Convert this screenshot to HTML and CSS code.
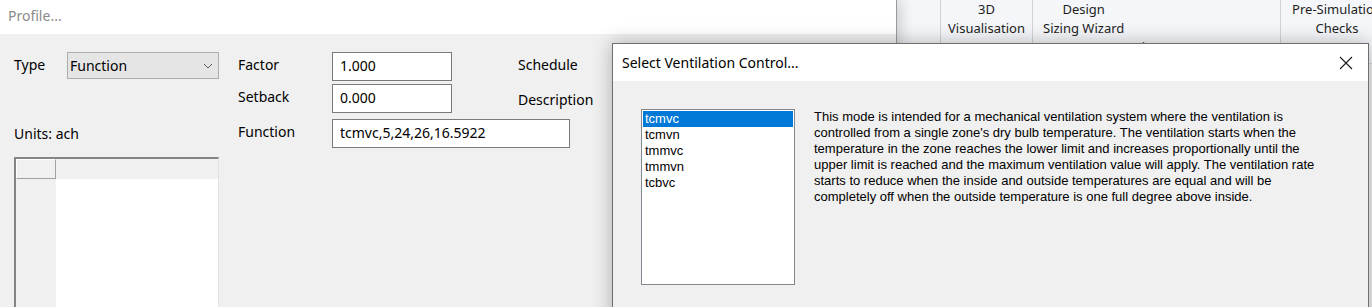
FILE: index.html
```html
<!DOCTYPE html>
<html lang="en">
<head>
    <meta charset="UTF-8">
    <title>Profile - Select Ventilation Control</title>
    <link rel="stylesheet" href="styles.css">
</head>
<body>
<div class="desktop">

    <!-- Profile window (left) -->
    <div class="profile-win">
        <div class="titlebar">Profile...</div>
        <div class="profile-body">
            <div class="form">
                <span class="lbl">Type</span>
                <div class="combo">
                    <span>Function</span>
                    <svg class="chevron" width="10" height="6" viewBox="0 0 10 6">
                        <path d="M1 1 L5 5 L9 1" fill="none" stroke="#606060" stroke-width="1"/>
                    </svg>
                </div>
                <span></span>
                <span class="lbl">Factor</span>
                <div class="cell"><div class="txt">1.000</div></div>
                <span class="lbl">Schedule</span>

                <span class="skip"></span>
                <span class="lbl">Setback</span>
                <div class="cell"><div class="txt">0.000</div></div>
                <span class="lbl desc">Description</span>

                <span class="lbl units">Units: ach</span>
                <span></span>
                <span class="lbl">Function</span>
                <div class="cell wide"><div class="txt txt-long">tcmvc,5,24,26,16.5922</div></div>
            </div>

            <div class="grid-box">
                <div class="corner"></div>
                <div class="col-head"></div>
                <div class="row-head"></div>
                <div class="data"></div>
            </div>
        </div>
    </div>

    <!-- Main window ribbon (right, behind) -->
    <div class="ribbon-win">
        <div class="ribbon">
            <div class="group g-first"></div>
            <div class="group g-3d">
                <div class="btn-text">3D<br>Visualisation</div>
                <div class="group-label">3D</div>
            </div>
            <div class="group g-design">
                <div class="btn-text btn-left">Design<br>Sizing Wizard</div>
                <div class="group-label">Design Days</div>
            </div>
            <div class="group g-pre">
                <div class="btn-text">Pre-Simulation<br>Checks</div>
            </div>
        </div>
        <div class="ribbon-rest"></div>
    </div>

    <!-- Dialog on top -->
    <div class="dialog">
        <div class="dlg-title">
            <span>Select Ventilation Control...</span>
            <svg class="close" width="14" height="14" viewBox="0 0 14 14">
                <path d="M1 1 L13 13 M13 1 L1 13" stroke="#1a1a1a" stroke-width="1.1"/>
            </svg>
        </div>
        <div class="dlg-body">
            <ul class="listbox">
                <li class="selected">tcmvc</li>
                <li>tcmvn</li>
                <li>tmmvc</li>
                <li>tmmvn</li>
                <li>tcbvc</li>
            </ul>
            <p class="mode-desc">
                This mode is intended for a mechanical ventilation system where the ventilation is<br>
                controlled from a single zone's dry bulb temperature. The ventilation starts when the<br>
                temperature in the zone reaches the lower limit and increases proportionally until the<br>
                upper limit is reached and the maximum ventilation value will apply. The ventilation rate<br>
                starts to reduce when the inside and outside temperatures are equal and will be<br>
                completely off when the outside temperature is one full degree above inside.
            </p>
        </div>
    </div>

</div>
</body>
</html>
```

FILE: styles.css
```css
body {
    margin: 0;
    width: 1372px;
    height: 307px;
    overflow: hidden;
    font-family: "Noto Sans", sans-serif;
    color: #000;
}

.desktop {
    position: relative;
    display: flex;
    width: 1372px;
    height: 307px;
    overflow: hidden;
    background-color: #f0f0f0;
}

/* Janela Profile */
.profile-win {
    position: relative;
    z-index: 1;
    width: 896px;
    flex-shrink: 0;
    background-color: #f0f0f0;
    border-right: 1px solid #9a9a9a;
    box-shadow: 3px 0 14px rgba(0,0,0,0.18);
}

.titlebar {
    height: 34px;
    background-color: #fff;
    padding-left: 8px;
    font-size: 14px;
    line-height: 32px;
    color: #8a8a8a;
}

.profile-body {
    padding: 18px 0 0 14px;
}

.form {
    display: grid;
    grid-template-columns: 53px 152px 19px 94px 186px auto;
    grid-template-rows: 32px 35px 29px;
    align-items: start;
}

.lbl {
    font-size: 14px;
    line-height: 26px;
    white-space: nowrap;
}

.skip {
    grid-column: 1 / 4;
}

.units {
    grid-column: 1 / 3;
    line-height: 29px;
}

.desc {
    line-height: 31px;
}

.combo {
    box-sizing: border-box;
    height: 27px;
    background-color: #e5e5e5;
    border: 1px solid #adadad;
    display: flex;
    align-items: center;
    justify-content: space-between;
    padding: 0 5px 0 2px;
    font-size: 14px;
}

.chevron {
    margin-top: 1px;
}

.wide {
    grid-column: 5 / 7;
}

.txt {
    box-sizing: border-box;
    width: 120px;
    height: 29px;
    background-color: #fff;
    border: 1px solid #7a7a7a;
    padding-left: 7px;
    font-size: 14px;
    line-height: 25px;
}

.txt-long {
    width: 238px;
}

/* Tabela */
.grid-box {
    margin-top: 9px;
    width: 205px;
    height: 200px;
    box-sizing: border-box;
    border-top: 2px solid #848484;
    border-left: 2px solid #848484;
    border-right: 1px solid #e3e3e3;
    display: grid;
    grid-template-columns: 40px 1fr;
    grid-template-rows: 20px 1fr;
}

.corner {
    box-sizing: border-box;
    border-top: 1px solid #fff;
    border-left: 1px solid #fff;
    border-right: 1px solid #a0a0a0;
    border-bottom: 1px solid #a0a0a0;
    background-color: #f0f0f0;
}

.col-head,
.row-head {
    background-color: #f0f0f0;
}

.data {
    background-color: #fff;
}

/* Ribbon */
.ribbon-win {
    flex: 1;
    background-color: #f0f0f0;
}

.ribbon {
    display: flex;
    height: 63px;
    background-color: #f4f6f9;
    border-bottom: 1px solid #d8d9db;
    font-size: 13px;
    color: #1e1e1e;
}

.group {
    flex-shrink: 0;
    display: flex;
    flex-direction: column;
    align-items: center;
    border-right: 1px solid #d3d3d3;
    line-height: 19px;
    white-space: nowrap;
}

.g-first { width: 43px; }
.g-3d { width: 91px; }
.g-design { width: 247px; }
.g-pre { width: 112px; border-right: none; }

.btn-text {
    text-align: center;
    height: 38px;
}

.btn-left {
    align-self: flex-start;
    margin-left: 10px;
}

.group-label {
    line-height: 19px;
}

/* Dialog */
.dialog {
    position: absolute;
    left: 612px;
    top: 43px;
    width: 757px;
    height: 290px;
    box-sizing: border-box;
    border: 1px solid #6f6f6f;
    background-color: #f0f0f0;
    box-shadow: 0 0 18px rgba(0,0,0,0.28);
    z-index: 2;
}

.dlg-title {
    height: 37px;
    background-color: #fff;
    display: flex;
    align-items: center;
    justify-content: space-between;
    padding: 0 15px 0 9px;
    font-size: 14px;
}

.close {
    margin-top: 1px;
}

.dlg-body {
    display: flex;
    align-items: flex-start;
    gap: 19px;
    padding: 28px 0 0 28px;
}

.listbox {
    list-style: none;
    margin: 0;
    box-sizing: border-box;
    width: 154px;
    height: 176px;
    padding: 1px;
    background-color: #fff;
    border: 1px solid #828790;
    font-family: "Liberation Sans", Arial, sans-serif;
    font-size: 13px;
    line-height: 16px;
}

.listbox li {
    padding-left: 2px;
}

.listbox .selected {
    background-color: #0078d7;
    color: #fff;
}

.mode-desc {
    margin: 0;
    font-family: "Liberation Sans", Arial, sans-serif;
    font-size: 13px;
    line-height: 16px;
    white-space: nowrap;
}
```
